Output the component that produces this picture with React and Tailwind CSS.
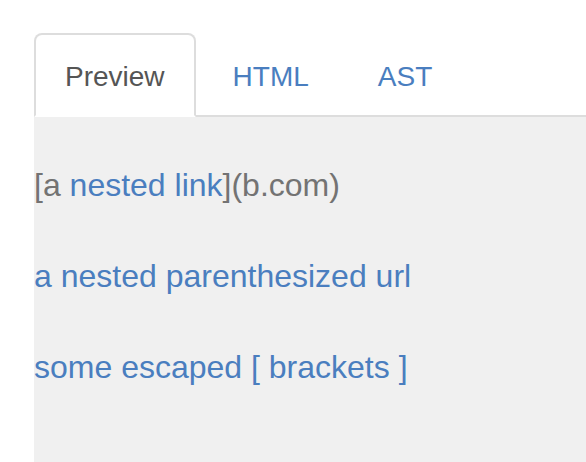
import React from "react";

export default function App() {
  const font = { fontFamily: '"Liberation Sans", Arial, sans-serif' };
  return (
    <div className="h-[462px] w-[586px] overflow-hidden bg-white" style={font}>
      <div className="ml-[34px] flex h-full flex-col pt-[33px]">
        <ul className="flex border-b-2 border-[#dddddd]">
          <li className="-mb-[2px] mr-[5px]">
            <a className="block rounded-t-[8px] border-2 border-[#dddddd] border-b-transparent bg-white px-[29px] pt-[22px] pb-[18px] text-[28px] leading-[40px] text-[#555555]">
              Preview
            </a>
          </li>
          <li className="-mb-[2px] mr-[5px]">
            <a className="block rounded-t-[8px] border-2 border-transparent px-[30px] pt-[22px] pb-[18px] text-[28px] leading-[40px] text-[#4a7ebf]">
              HTML
            </a>
          </li>
          <li className="-mb-[2px] mr-[5px]">
            <a className="block rounded-t-[8px] border-2 border-transparent px-[30px] pt-[22px] pb-[18px] text-[28px] leading-[40px] text-[#4a7ebf]">
              AST
            </a>
          </li>
        </ul>
        <div className="flex-1 bg-[#f0f0f0] pt-[45px] text-[32px] leading-[46px] text-[#737373]">
          <p className="mb-[45px]">
            [a <span className="text-[#4a7ebf]">nested link</span>](b.com)
          </p>
          <p className="mb-[45px] text-[#4a7ebf]">a nested parenthesized url</p>
          <p className="text-[#4a7ebf]">some escaped [ brackets ]</p>
        </div>
      </div>
    </div>
  );
}
